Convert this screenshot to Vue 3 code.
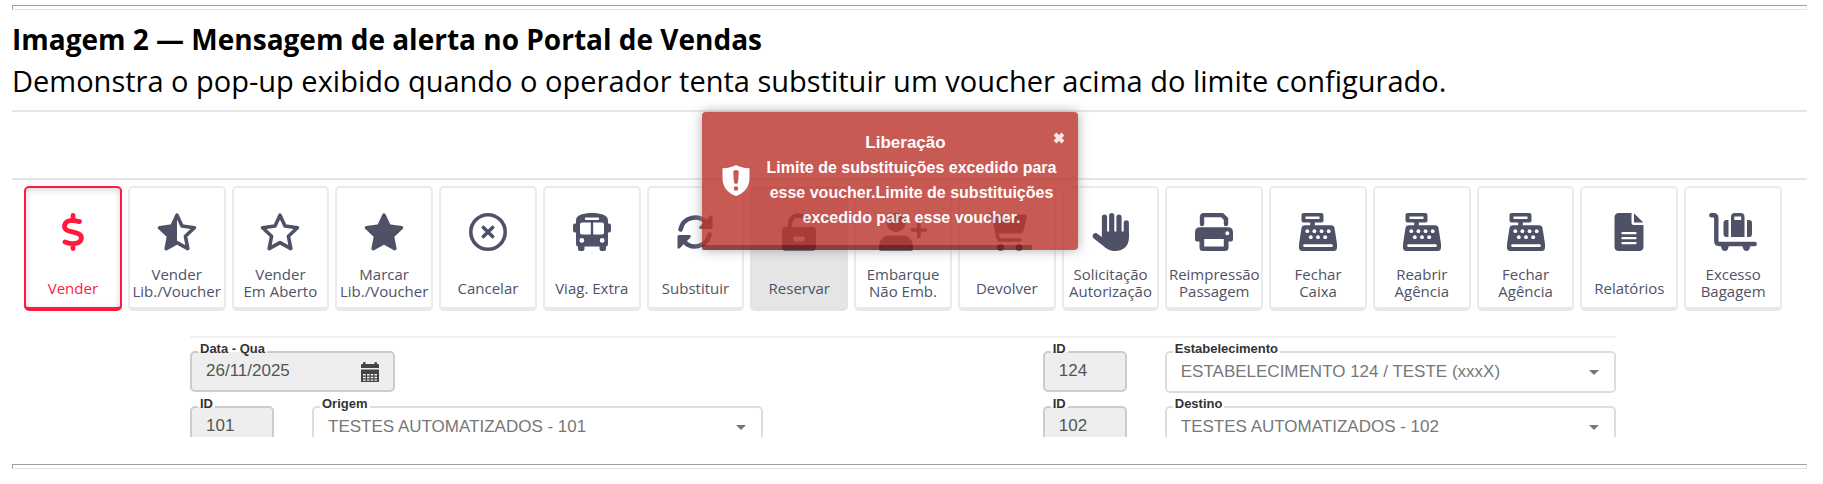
<script setup>
import { ref } from 'vue'

const tiles = [
  { icon: 'dollar', w: 38, lines: ['Vender'], active: true },
  { icon: 'half', w: 40, lines: ['Vender', 'Lib./Voucher'] },
  { icon: 'star', w: 40, lines: ['Vender', 'Em Aberto'] },
  { icon: 'full', w: 40, lines: ['Marcar', 'Lib./Voucher'] },
  { icon: 'cancel', w: 38, lines: ['Cancelar'] },
  { icon: 'bus', w: 38, lines: ['Viag. Extra'] },
  { icon: 'sync', w: 38, lines: ['Substituir'] },
  { icon: 'lock', w: 34, lines: ['Reservar'], disabled: true },
  { icon: 'user', w: 48, lines: ['Embarque', 'Não Emb.'] },
  { icon: 'cart', w: 40, lines: ['Devolver'] },
  { icon: 'hand', w: 38, lines: ['Solicitação', 'Autorização'] },
  { icon: 'printer', w: 38, lines: ['Reimpressão', 'Passagem'] },
  { icon: 'register', w: 38, lines: ['Fechar', 'Caixa'] },
  { icon: 'register', w: 38, lines: ['Reabrir', 'Agência'] },
  { icon: 'register', w: 38, lines: ['Fechar', 'Agência'] },
  { icon: 'file', w: 30, lines: ['Relatórios'] },
  { icon: 'luggage', w: 48, lines: ['Excesso', 'Bagagem'] },
]

const starPoints = '20,2.2 25,13 37.4,14.8 28.4,23.2 30.8,35.6 20,29.6 9.2,35.6 11.6,23.2 2.6,14.8 15,13'
const showToast = ref(true)
</script>

<template>
  <main class="page">
    <hr class="rule">
    <h1 class="title">Imagem 2 — Mensagem de alerta no Portal de Vendas</h1>
    <p class="subtitle">Demonstra o pop-up exibido quando o operador tenta substituir um voucher acima do limite configurado.</p>

    <section class="portal">
      <div class="topbar"></div>

      <nav class="tiles">
        <button
          v-for="(t, i) in tiles"
          :key="i"
          type="button"
          class="tile"
          :class="{ active: t.active, disabled: t.disabled }"
          :disabled="t.disabled"
        >
          <svg class="icon" :width="t.w" height="38" :viewBox="`0 0 ${t.w} 38`" fill="currentColor" stroke="none" aria-hidden="true">
            <g v-if="t.icon === 'dollar'" fill="none" stroke="currentColor" stroke-width="4.8" stroke-linecap="round" stroke-linejoin="round">
              <path d="M25.5 8.6C20 7 11.5 6.6 10.6 12.4C9.8 17.4 15 18 19 19C23.5 20.1 28.2 21 27.3 25.8C26.2 31.6 17.5 31.4 11 28.9M19 2.4V7M19 31V35.6" />
            </g>
            <g v-else-if="t.icon === 'half'">
              <polygon :points="starPoints" fill="none" stroke="currentColor" stroke-width="3.6" stroke-linejoin="round" />
              <path d="M20 2.2V29.6L9.2 35.6L11.6 23.2L2.6 14.8L15 13Z" />
            </g>
            <polygon v-else-if="t.icon === 'star'" :points="starPoints" fill="none" stroke="currentColor" stroke-width="3.6" stroke-linejoin="round" />
            <polygon v-else-if="t.icon === 'full'" :points="starPoints" stroke="currentColor" stroke-width="3.6" stroke-linejoin="round" />
            <g v-else-if="t.icon === 'cancel'" fill="none" stroke="currentColor" stroke-width="3.6" stroke-linecap="round">
              <circle cx="19" cy="19" r="17.2" />
              <path d="M14.4 14.4L23.6 23.6M23.6 14.4L14.4 23.6" />
            </g>
            <g v-else-if="t.icon === 'bus'">
              <path fill-rule="evenodd" d="M19 0C28 0 35 2.5 35 7V31Q35 33.4 33.4 33.4H4.6Q3 33.4 3 31V7C3 2.5 10 0 19 0ZM13 4.6A1.2 1.2 0 0 0 13 7H25A1.2 1.2 0 0 0 25 4.6ZM9 9.6Q7 9.6 7 11.6V19.5Q7 21.5 9 21.5H17.8V9.6ZM20.2 9.6V21.5H29Q31 21.5 31 19.5V11.6Q31 9.6 29 9.6ZM8.8 25A2.4 2.4 0 1 0 8.8 29.8A2.4 2.4 0 1 0 8.8 25ZM29.2 25A2.4 2.4 0 1 0 29.2 29.8A2.4 2.4 0 1 0 29.2 25Z" />
              <rect x="0" y="10.5" width="4.5" height="9" rx="2" />
              <rect x="33.5" y="10.5" width="4.5" height="9" rx="2" />
              <rect x="5" y="30" width="6.5" height="8" rx="2" />
              <rect x="26.5" y="30" width="6.5" height="8" rx="2" />
            </g>
            <g v-else-if="t.icon === 'sync'">
              <path d="M4.5 16.5A14.8 14.8 0 0 1 30 9.5M33.5 21.5A14.8 14.8 0 0 1 8 28.5" fill="none" stroke="currentColor" stroke-width="4.6" stroke-linecap="round" />
              <path d="M36.5 3.5V14.5Q36.5 16 35 16H24Q22.4 15 23.6 13.6L34 3Q36.5 1.5 36.5 3.5Z" />
              <path d="M1.5 34.5V23.5Q1.5 22 3 22H14Q15.6 23 14.4 24.4L4 35Q1.5 36.5 1.5 34.5Z" />
            </g>
            <g v-else-if="t.icon === 'lock'">
              <path fill-rule="evenodd" d="M4 14H30Q34 14 34 18V34Q34 38 30 38H4Q0 38 0 34V18Q0 14 4 14ZM13.5 23.6A2.4 2.4 0 0 0 13.5 28.4H20.5A2.4 2.4 0 0 0 20.5 23.6Z" />
              <path d="M8 16V10.5A8.2 8.2 0 0 1 23.5 7" fill="none" stroke="currentColor" stroke-width="4.6" stroke-linecap="round" />
            </g>
            <g v-else-if="t.icon === 'user'">
              <circle cx="17" cy="9.5" r="9.5" />
              <path d="M0 36V34C0 27 5 22.5 11 22.5H23C29 22.5 34 27 34 34V36Q34 38 32 38H2Q0 38 0 36Z" />
              <path d="M39.8 10.5V23.5M33.3 17H46.3" fill="none" stroke="currentColor" stroke-width="3.6" stroke-linecap="round" />
            </g>
            <g v-else-if="t.icon === 'cart'">
              <path d="M1.8 2H5Q6.5 2 7 3.5L11 25Q11.5 27 13.5 27H33" fill="none" stroke="currentColor" stroke-width="3.6" stroke-linecap="round" />
              <path d="M6 1.5H15L22.5 10.5L30 1.5H38Q40.3 1.5 39.7 4L36.5 17.5Q35.8 20.5 33.2 20.5H10Z" />
              <circle cx="13.5" cy="34.5" r="3.5" />
              <circle cx="32" cy="34.5" r="3.5" />
            </g>
            <g v-else-if="t.icon === 'hand'">
              <path d="M12.5 4.2V22M19.7 2.6V20M27 4.2V22M34.3 9.8V24" fill="none" stroke="currentColor" stroke-width="5.2" stroke-linecap="round" />
              <path d="M9.9 18.5H36.9V25C36.9 33 31 38 23.5 38C18 38 15 36 12 33.5L1.5 25.2C-.8 23 1.8 18.8 5 20.5L9.9 24Z" />
            </g>
            <g v-else-if="t.icon === 'printer'">
              <path d="M7 11V4.5Q7 2 9.5 2H27L31 6V11" fill="none" stroke="currentColor" stroke-width="4.4" stroke-linecap="round" />
              <path fill-rule="evenodd" d="M5 14.2H33Q38 14.2 38 19.2V26.5Q38 28.6 36 28.6H33.5V34.5Q33.5 38 30 38H8Q4.5 38 4.5 34.5V28.6H2Q0 28.6 0 26.5V19.2Q0 14.2 5 14.2ZM9.2 26V33.5H28.8V26ZM32.3 18.2A2 2 0 1 0 32.3 22.2A2 2 0 1 0 32.3 18.2Z" />
            </g>
            <g v-else-if="t.icon === 'register'">
              <path fill-rule="evenodd" d="M3.5 0H22.5Q24.5 0 24.5 2V7.5Q24.5 9.5 22.5 9.5H15.8V12.2H32Q35 12.2 35.5 15L38 31V34.5Q38 38 34.5 38H3.5Q0 38 0 34.5V31L2.5 15Q3 12.2 6 12.2H11.2V9.5H4.5Q2.5 9.5 2.5 7.5V2Q2.5 0 4.5 0ZM6.5 3.5V6H20.5V3.5ZM5.5 31.2A1.2 1.2 0 0 0 5.5 34H32.5A1.2 1.2 0 0 0 32.5 31.2Z" />
              <g fill="#fff">
                <circle v-for="x in [8.3, 15.4, 22.6, 29.7]" :key="x" :cx="x" cy="18.2" r="1.9" />
                <circle v-for="x in [11.8, 19, 26.2]" :key="x" :cx="x" cy="24.2" r="1.9" />
              </g>
            </g>
            <g v-else-if="t.icon === 'file'">
              <path fill-rule="evenodd" d="M5 0H17.5V9.5Q17.5 12 20 12H29.5V33.5Q29.5 38 25 38H5Q.5 38 .5 33.5V4.5Q.5 0 5 0ZM8.5 19A1 1 0 0 0 8.5 21.3H21.5A1 1 0 0 0 21.5 19ZM8.5 24A1 1 0 0 0 8.5 26.3H21.5A1 1 0 0 0 21.5 24ZM8.5 29A1 1 0 0 0 8.5 31.3H21.5A1 1 0 0 0 21.5 29Z" />
              <path d="M20 .3L29.3 9.6H20Z" />
            </g>
            <g v-else>
              <path d="M2.3 2.3H4.5Q7.3 2.3 7.3 5V28Q7.3 31 10.3 31H45.7" fill="none" stroke="currentColor" stroke-width="4.4" stroke-linecap="round" stroke-linejoin="round" />
              <path fill-rule="evenodd" d="M22 24V4Q22 0 26 0H31.5Q35.5 0 35.5 4V24ZM25.3 3.5V7H32.2V3.5Z" />
              <path d="M19.5 7V24H17.5Q14.5 24 14.5 21V10Q14.5 7 17.5 7ZM38 7V24H40Q43 24 43 21V10Q43 7 40 7Z" />
              <path d="M11.5 32H20L19 36Q18.3 38 16 38Q13.5 38 12.8 36ZM33 32H41.5L40.5 36Q39.8 38 37.5 38Q35 38 34.3 36Z" />
            </g>
          </svg>
          <span class="caption" :class="{ single: t.lines.length === 1 }">
            <span v-for="l in t.lines" :key="l" class="line">{{ l }}</span>
          </span>
        </button>
      </nav>

      <form class="form" @submit.prevent>
        <div class="group">
          <div class="field grey date">
            <label for="data">Data - Qua</label>
            <input id="data" type="text" value="26/11/2025" readonly>
            <button type="button" class="calendar" aria-label="Abrir calendário">
              <svg width="18" height="20" viewBox="0 0 18 20" fill="#444">
                <path d="M0 6V3Q0 2 1 2H2V1Q2 0 3.3 0T4.6 1V2H13.4V1Q13.4 0 14.7 0T16 1V2H17Q18 2 18 3V6Z" />
                <path fill-rule="evenodd" d="M0 7.5H18V20H0ZM2 12V13.5H4.8V12ZM6 12V13.5H8.5V12ZM9.7 12V13.5H12.2V12ZM13.4 12V13.5H16V12ZM2 14.8V16.2H4.8V14.8ZM6 14.8V16.2H8.5V14.8ZM9.7 14.8V16.2H12.2V14.8ZM13.4 14.8V16.2H16V14.8ZM2 17.5V18.8H4.8V17.5ZM6 17.5V18.8H8.5V17.5ZM9.7 17.5V18.8H12.2V17.5ZM13.4 17.5V18.8H16V17.5Z" />
              </svg>
            </button>
          </div>
        </div>
        <div class="group">
          <div class="field grey">
            <label for="id-est">ID</label>
            <input id="id-est" type="text" value="124" readonly>
          </div>
          <div class="field">
            <label for="est">Estabelecimento</label>
            <select id="est"><option>ESTABELECIMENTO 124 / TESTE (xxxX)</option></select>
            <svg class="arrow" width="10" height="5" viewBox="0 0 10 5"><path d="M0 0H10L5 5Z" fill="#777" /></svg>
          </div>
        </div>
        <div class="group">
          <div class="field grey">
            <label for="id-org">ID</label>
            <input id="id-org" type="text" value="101" readonly>
          </div>
          <div class="field">
            <label for="org">Origem</label>
            <select id="org"><option>TESTES AUTOMATIZADOS - 101</option></select>
            <svg class="arrow" width="10" height="5" viewBox="0 0 10 5"><path d="M0 0H10L5 5Z" fill="#777" /></svg>
          </div>
        </div>
        <div class="group">
          <div class="field grey">
            <label for="id-dst">ID</label>
            <input id="id-dst" type="text" value="102" readonly>
          </div>
          <div class="field">
            <label for="dst">Destino</label>
            <select id="dst"><option>TESTES AUTOMATIZADOS - 102</option></select>
            <svg class="arrow" width="10" height="5" viewBox="0 0 10 5"><path d="M0 0H10L5 5Z" fill="#777" /></svg>
          </div>
        </div>
      </form>

      <div v-if="showToast" class="toast" role="alert">
        <svg class="shield" width="28" height="31" viewBox="0 0 28 31" fill="#fff" aria-hidden="true">
          <path fill-rule="evenodd" d="M14 0Q19 3 27.5 3.2V13Q27.5 26 14 31Q.5 26 .5 13V3.2Q9 3 14 0ZM14 5Q11 5 11.2 7.5L12 17Q12.2 19 14 19T16 17L16.8 7.5Q17 5 14 5ZM14 21.2A2.3 2.3 0 1 0 14 25.8A2.3 2.3 0 1 0 14 21.2Z" />
        </svg>
        <div class="message">
          <button type="button" class="close" aria-label="Dispensar" @click="showToast = false">
            <svg width="12" height="12" viewBox="0 0 12 12"><path d="M2 2L10 10M10 2L2 10" stroke="#fff" stroke-width="4" /></svg>
          </button>
          <div class="heading">Liberação</div>
          <div>Limite de substituições excedido para esse voucher.Limite de substituições excedido para esse voucher.</div>
        </div>
        <div class="progress"></div>
      </div>
    </section>

    <hr class="rule">
  </main>
</template>

<style>
body { margin: 0; background: #fff; }
</style>

<style scoped>
.page {
  padding: 5px 16px 15px 12px;
  color: #000;
  font-family: "Open Sans", sans-serif;
}
.page *, .page { box-sizing: border-box; }
.rule {
  height: 5px;
  margin: 0;
  border: 1px solid #a0a0a0;
  border-right-color: #e3e3e3;
  border-bottom-color: #e3e3e3;
}
.title {
  margin: 8px 0 0;
  font-size: 28px;
  line-height: 42px;
  font-weight: 700;
}
.subtitle {
  margin: 0;
  font-size: 29px;
  line-height: 42px;
}
.portal {
  position: relative;
  margin: 8px 0 27px;
  border-top: 2px solid #e6e6e6;
}
.topbar {
  height: 68px;
  border-bottom: 2px solid #e4e4e4;
}
.tiles {
  display: grid;
  grid-template-columns: repeat(17, minmax(0, 1fr));
  gap: 6px;
  padding: 6px 25px 0 12px;
}
.tile {
  display: flex;
  flex-direction: column;
  align-items: center;
  min-height: 125px;
  padding: 25px 0 0;
  border: 2px solid #ebebeb;
  border-bottom: 4px solid #e8e8e8;
  border-radius: 5px;
  background: #fff;
  color: #4f5267;
  font-family: "Open Sans", sans-serif;
  font-size: 15px;
  line-height: 17px;
}
.tile.active {
  border-color: #ff1a3d;
  color: #ff1a3d;
  box-shadow: inset 0 2px 6px rgba(0, 0, 0, 0.16);
}
.tile.disabled {
  border-color: #e3e3e3;
  background: #e5e5e5;
}
.icon { flex: none; }
.caption { margin-top: 15px; }
.caption.single { margin-top: 29px; }
.line { display: block; white-space: nowrap; }

.form {
  display: grid;
  grid-template-columns: 40.2% 40.2%;
  justify-content: space-between;
  gap: 13px 0;
  height: 101px;
  margin: 25px 191px 0 178px;
  padding-top: 13px;
  border-top: 2px solid #f0f0f0;
  overflow: hidden;
  font-family: "Liberation Sans", Arial, sans-serif;
}
.group {
  display: grid;
  grid-template-columns: 84px 1fr;
  gap: 38px;
  align-items: start;
}
.field {
  position: relative;
  display: flex;
  align-items: center;
  height: 42px;
  border: 2px solid #ddd;
  border-radius: 5px;
  background: #fff;
}
.field.grey {
  height: 41px;
  border-color: #ccc;
  background: #eee;
}
.field.date {
  grid-column: 1 / 3;
  width: 205px;
}
.field label {
  position: absolute;
  top: -11px;
  left: 6px;
  padding: 0 2px;
  background: #fff;
  color: #333;
  font-size: 13px;
  line-height: 14px;
  font-weight: 700;
}
.field.grey label { background: linear-gradient(#fff 10px, #eee 10px); }
.field input,
.field select {
  flex: 1;
  min-width: 0;
  height: 36px;
  margin: 0 0 1px;
  padding: 0 14px;
  border: 0;
  background: transparent;
  appearance: none;
  color: #555;
  font-family: inherit;
  font-size: 17px;
}
.field select { color: #777; }
.calendar {
  height: 20px;
  margin-right: 14px;
  padding: 0;
  border: 0;
  background: none;
}
.calendar svg, .close svg { display: block; }
.arrow {
  position: absolute;
  right: 15px;
  top: 17px;
  pointer-events: none;
}

.toast {
  position: absolute;
  top: 0;
  left: calc(50% - 208px);
  display: flex;
  align-items: center;
  width: 376px;
  padding: 18px 13px 20px 20px;
  border-radius: 4px;
  background: #bd362f;
  box-shadow: 0 0 12px #999;
  color: #fff;
  opacity: 0.82;
  font-family: "Liberation Sans", Arial, sans-serif;
  font-size: 16px;
  line-height: 25px;
  font-weight: 700;
  text-align: center;
}
.shield { flex: none; margin-right: 9px; }
.message { flex: 1; }
.heading { font-size: 17px; }
.close {
  float: right;
  margin-top: 2px;
  padding: 0;
  border: 0;
  background: none;
  opacity: 0.85;
}
.progress {
  position: absolute;
  left: 0;
  bottom: 0;
  width: 88%;
  height: 5px;
  background: #000;
  opacity: 0.4;
}
</style>
